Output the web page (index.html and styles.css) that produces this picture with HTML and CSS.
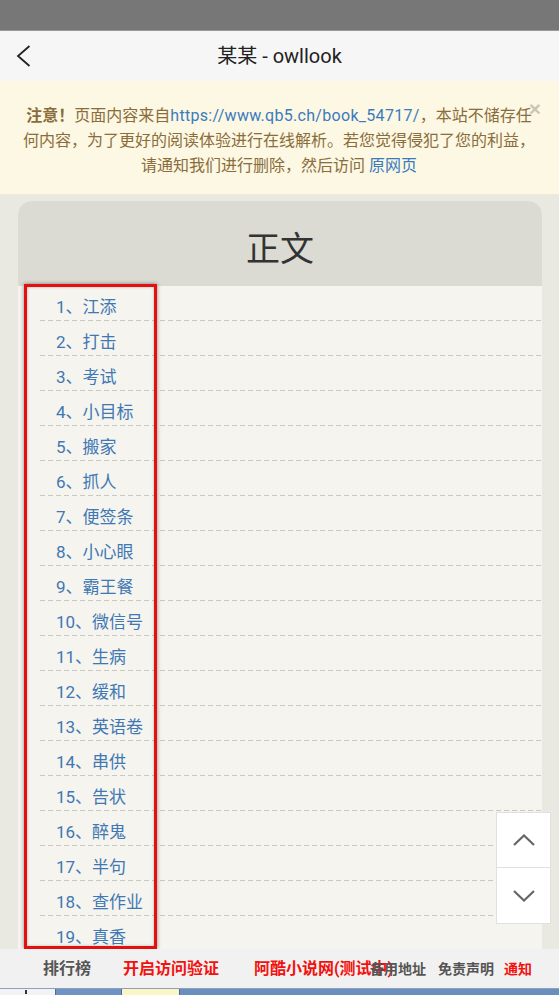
FILE: index.html
```html
<!DOCTYPE html>
<html lang="zh">
<head>
<meta charset="utf-8">
<title>某某 - owllook</title>
<link rel="stylesheet" href="styles.css">
</head>
<body>
<div class="page">
  <div class="statusbar"></div>
  <div class="topbar">
    <svg class="back" width="16" height="24" viewBox="0 0 16 24"><polyline points="13.5,2 2,12 13.5,22" fill="none" stroke="#222" stroke-width="1.8"/></svg>
    <span class="title">某某 - owllook</span>
  </div>
  <div class="notice">
    <span class="close">×</span>
    <strong>注意！</strong>页面内容来自<a class="url" href="#">https://www.qb5.ch/book_54717/</a>，本站不储存任何内容，为了更好的阅读体验进行在线解析。若您觉得侵犯了您的利益，请通知我们进行删除，然后访问 <a href="#">原网页</a>
  </div>
  <div class="content">
    <div class="card">
      <div class="card-head">正文</div>
      <ul class="chapters">
        <li><a href="#">1、江添</a></li>
        <li><a href="#">2、打击</a></li>
        <li><a href="#">3、考试</a></li>
        <li><a href="#">4、小目标</a></li>
        <li><a href="#">5、搬家</a></li>
        <li><a href="#">6、抓人</a></li>
        <li><a href="#">7、便签条</a></li>
        <li><a href="#">8、小心眼</a></li>
        <li><a href="#">9、霸王餐</a></li>
        <li><a href="#">10、微信号</a></li>
        <li><a href="#">11、生病</a></li>
        <li><a href="#">12、缓和</a></li>
        <li><a href="#">13、英语卷</a></li>
        <li><a href="#">14、串供</a></li>
        <li><a href="#">15、告状</a></li>
        <li><a href="#">16、醉鬼</a></li>
        <li><a href="#">17、半句</a></li>
        <li><a href="#">18、查作业</a></li>
        <li><a href="#">19、真香</a></li>
        <li><a href="#">20、后门</a></li>
      </ul>
    </div>
    <div class="highlight"></div>
    <div class="scroller">
      <div class="scroll-btn"><svg width="22" height="12" viewBox="0 0 22 12"><polyline points="1,11 11,1.5 21,11" fill="none" stroke="#666" stroke-width="2.2"/></svg></div>
      <div class="scroll-btn"><svg width="22" height="12" viewBox="0 0 22 12"><polyline points="1,1 11,10.5 21,1" fill="none" stroke="#666" stroke-width="2.2"/></svg></div>
    </div>
  </div>
  <div class="footer">
    <span class="f-gray">排行榜</span>
    <span class="f-red">开启访问验证</span>
    <span class="f-red">阿酷小说网(测试中)</span>
    <span class="f-gray small">备用地址</span>
    <span class="f-gray small">免责声明</span>
    <span class="f-red small">通知</span>
  </div>
  <div class="taskbar">
    <div class="tb-start"><span class="tb-mark"></span></div>
    <div class="tb-blue"></div>
    <div class="tb-tab"></div>
    <div class="tb-rest"></div>
  </div>
</div>
</body>
</html>
```

FILE: styles.css
```css
html, body {
  margin: 0;
  padding: 0;
}
body {
  font-family: Roboto, "Noto Sans CJK SC", "Noto Sans", sans-serif;
  background: #eae9e1;
}
a {
  text-decoration: none;
}
.page {
  width: 559px;
  height: 995px;
  display: flex;
  flex-direction: column;
  overflow: hidden;
}
.statusbar {
  height: 30px;
  flex: none;
  background: #777777;
  border-bottom: 1px solid #9a9a9a;
}
.topbar {
  height: 50px;
  flex: none;
  background: #f6f6f6;
  display: flex;
  align-items: center;
  justify-content: center;
  position: relative;
}
.back {
  position: absolute;
  left: 16px;
  top: 13px;
}
.title {
  font-size: 20px;
  color: #222;
  line-height: 24px;
}
.notice {
  flex: none;
  position: relative;
  background: #fcf8e3;
  color: #8a6d3b;
  font-size: 16px;
  line-height: 25px;
  text-align: center;
  padding: 22px 23px 16px 22px;
  border-bottom: 1px solid #f3ecd4;
}
.notice a {
  color: #3b7bbd;
}
.notice .url {
  letter-spacing: 0.3px;
}
.notice strong {
  font-weight: 700;
}
.close {
  position: absolute;
  right: 18px;
  top: 17px;
  font-size: 21px;
  line-height: 21px;
  font-weight: 700;
  color: #000;
  opacity: 0.2;
  font-family: "Liberation Sans", Arial, sans-serif;
}
.content {
  flex: 1;
  position: relative;
  overflow: hidden;
  padding: 6px 17px 0 18px;
}
.card {
  background: #f5f4ee;
  border-radius: 14px 14px 0 0;
  overflow: hidden;
}
.card-head {
  height: 85px;
  background: #dcdbd3;
  display: flex;
  align-items: center;
  justify-content: center;
  font-size: 34px;
  color: #333;
  padding-top: 5px;
  box-sizing: border-box;
}
.chapters {
  list-style: none;
  margin: 0 0 0 22px;
  padding: 0;
}
.chapters li {
  padding: 9px 0 2px 16px;
  line-height: 24px;
  font-size: 17px;
  background: linear-gradient(to right, #c9c9c4 5px, transparent 5px) left bottom / 8px 1px repeat-x;
}
.chapters a {
  color: #3f78b4;
}
.highlight {
  position: absolute;
  left: 24px;
  top: 89px;
  width: 133px;
  bottom: 0;
  box-sizing: border-box;
  border: 3px solid #e3100f;
  box-shadow: 0 0 4px rgba(0, 0, 0, 0.45), inset 0 0 3px rgba(0, 0, 0, 0.25);
}
.scroller {
  position: absolute;
  left: 496px;
  top: 617px;
  width: 55px;
  display: flex;
  flex-direction: column;
}
.scroll-btn {
  height: 56px;
  background: #fff;
  border: 1px solid #e0e0e0;
  box-sizing: border-box;
  display: flex;
  align-items: center;
  justify-content: center;
}
.scroll-btn + .scroll-btn {
  border-top: none;
}
.footer {
  flex: none;
  height: 39px;
  background: #f1f1f1;
  display: grid;
  grid-template-columns: 80px 131px 116px 68px 66px auto;
  align-items: center;
  padding-left: 43px;
  font-weight: 700;
  white-space: nowrap;
}
.footer span {
  font-size: 16px;
  line-height: 20px;
}
.footer .small {
  font-size: 14px;
}
.f-gray {
  color: #555;
}
.f-red {
  color: #f2110f;
}
.taskbar {
  flex: none;
  height: 6px;
  display: flex;
  border-top: 1px solid #8aa0bd;
}
.tb-start {
  width: 55px;
  background: #f3f3f3;
  position: relative;
}
.tb-mark {
  position: absolute;
  left: 25px;
  top: 1px;
  width: 2px;
  height: 4px;
  background: #333;
}
.tb-blue {
  width: 65px;
  background: #6f93c2;
  border-left: 1px solid #4a6b96;
}
.tb-tab {
  width: 57px;
  background: #fbf6c6;
  border-left: 1px solid #4a6b96;
  border-right: 1px solid #4a6b96;
}
.tb-rest {
  flex: 1;
  background: #6a8fbf;
}
```
